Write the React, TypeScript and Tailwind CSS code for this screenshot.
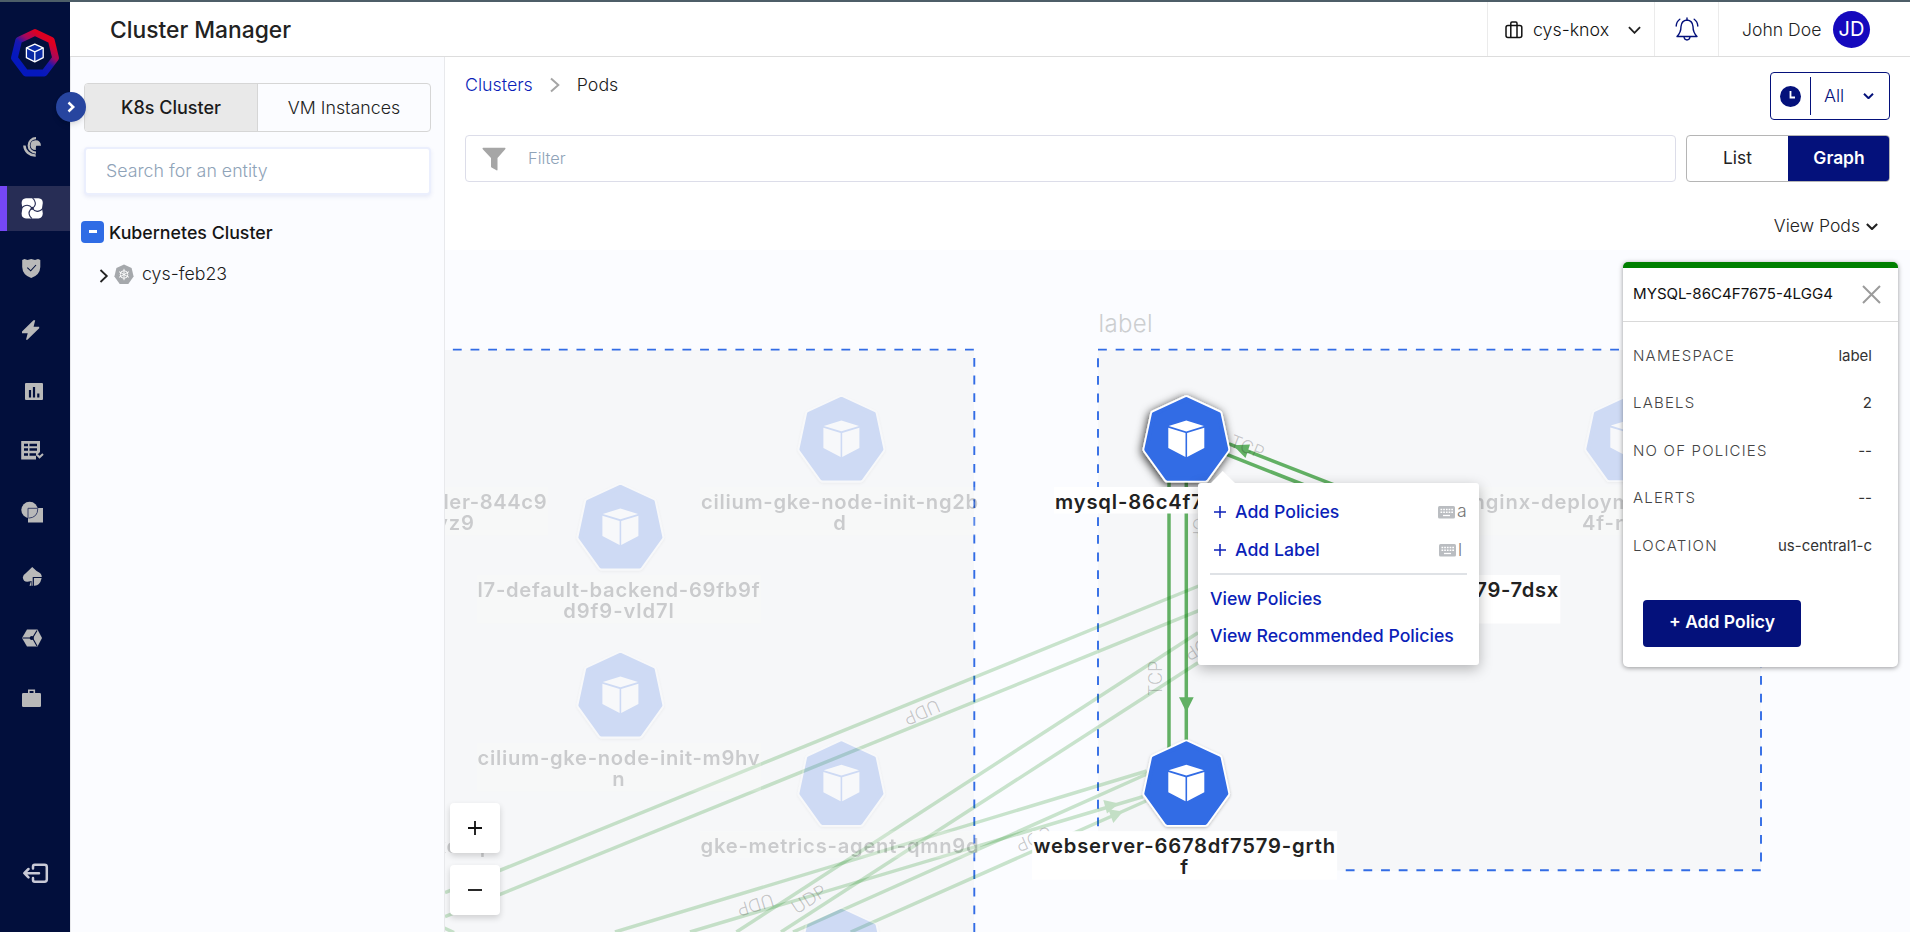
import React from "react";

const NAVY = "#04117b";

/* ---------- Sidebar ---------- */

function Logo() {
  return (
    <svg viewBox="0 0 56 56" className="h-14 w-14">
      <defs>
        <linearGradient id="ring" x1="0.3" y1="0.75" x2="0.78" y2="0.12">
          <stop offset="0" stopColor="#0518bd" />
          <stop offset="0.38" stopColor="#1a18b0" />
          <stop offset="0.62" stopColor="#a4085f" />
          <stop offset="0.95" stopColor="#de0020" />
        </linearGradient>
      </defs>
      <path
        d="M28 8.500 L44.300 16.300 L48.600 34 L37.300 49 H18.700 L7.400 34 L11.700 16.300 Z"
        fill="none"
        stroke="url(#ring)"
        strokeWidth="6.800"
        strokeLinejoin="round"
      />
      <g fill="#0a2aa5" stroke="#fff" strokeWidth="1.300" strokeLinejoin="round" transform="translate(0 1.300)">
        <path d="M27.800 18.800 L36.200 22.600 V32.400 L27.800 36.600 L19.400 32.400 V22.600 Z" />
        <path d="M19.400 22.600 L27.800 26.600 L36.200 22.600 M27.800 26.600 V36.600" fill="none" />
      </g>
    </svg>
  );
}

const navIcons: { id: string; active?: boolean; art: React.ReactNode }[] = [
  {
    id: "overview",
    art: (
      <g>
        <path d="M35.500 15.200 Q40.500 15 41 20.700 H36.300 Q35.800 21 35.800 25 Q30.500 25 30.500 20.200 Q30.500 15.400 35.500 15.200Z" />
        <g fill="none" stroke="#b9b9b9">
          <path d="M36 13.100 A7.300 7.300 0 0 0 36 27.700" strokeWidth="2.200" />
          <path d="M24.400 20.500 A10.800 10.500 0 0 0 35.700 30.500" strokeWidth="2.500" />
        </g>
      </g>
    ),
  },
  {
    id: "clusters",
    active: true,
    art: (
      <g>
        <path
          d="M26 12.200 H38.500 Q42.800 12.500 42.800 17 L42 22.300 L42.800 27.500 Q42.500 32 38.500 32.400 H26 Q21.600 32.200 21.600 27.500 L22.400 22.300 L21.600 17 Q21.800 12.500 26 12.200Z"
          fill="#fff"
        />
        <path
          d="M32.200 22.300 Q37 19.500 34.500 14.500 Q33.800 13 32.500 12.200 M32.200 22.300 Q35.500 27 40.300 24.500 Q42 23.700 42.800 22.300 M32.200 22.300 Q27.500 25.500 29.800 30 Q30.700 31.700 32 32.400 M32.200 22.300 Q29 17.800 24.200 20 Q22.500 20.800 21.600 22.300"
          fill="none"
          stroke="#272d55"
          strokeWidth="1.100"
        />
        <circle cx="32.200" cy="22.300" r="1.500" fill="#272d55" />
      </g>
    ),
  },
  {
    id: "policies",
    art: (
      <g>
        <path d="M22.200 13 L24.500 12 L27.500 13 L31.200 12 L35 13 L38 12 L40.300 13 V20 Q40 28 31.200 31 Q22.500 28 22.200 20Z" />
        <path d="M27.300 20.700 L30.700 23.800 L36 18" fill="none" stroke="#020f3c" strokeWidth="1.100" />
      </g>
    ),
  },
  {
    id: "actions",
    art: <path d="M33.500 12.200 H35.200 L33.600 18.800 H39.200 V20.200 L27.400 31.800 H26 L27.700 25.300 H22 V23.600Z" />,
  },
  {
    id: "reports",
    art: (
      <g>
        <rect x="25" y="14" width="18" height="17" rx="1" />
        <path d="M30 28.500 V21 M34 28.500 V18 M38.300 28.500 V24.500" stroke="#020f3c" strokeWidth="2.200" />
      </g>
    ),
  },
  {
    id: "inventory",
    art: (
      <g>
        <path d="M21.200 11 H40 V22 L36 26 V29.500 H21.200Z" />
        <path
          d="M24 15 H28 M29.500 15 H37 M24 19.500 H28 M29.500 19.500 H37 M24 24.500 H28 M29.500 24.500 H36"
          stroke="#020f3c"
          strokeWidth="2.400"
        />
        <path d="M37 24.800 L39.500 27.300 L43 24" fill="none" stroke="#b9b9b9" strokeWidth="2" />
      </g>
    ),
  },
  {
    id: "images",
    art: (
      <g>
        <circle cx="29.600" cy="19" r="8.300" />
        <rect x="28" y="17" width="15" height="14.500" />
        <path d="M28 27 V17.300 H37.800 Q38 26.500 28.500 27.200" fill="none" stroke="#3a426a" strokeWidth="1" />
      </g>
    ),
  },
  {
    id: "remediation",
    art: (
      <g>
        <path d="M32.200 15 Q36 19 40 21 Q42.500 23.500 41.500 26.500 Q40 33.500 34.500 33.800 H29.500 L31 29 Q23.500 31.500 22.800 25.500 Q23 22.500 26 21Z" />
        <path d="M33.300 34 V25.500 H42.500" fill="none" stroke="#020f3c" strokeWidth="1.200" />
        <path d="M31.600 29 V34" stroke="#020f3c" strokeWidth="0.600" />
      </g>
    ),
  },
  {
    id: "integrations",
    art: (
      <g>
        <path d="M27 16.500 H37.500 L42 25 L37.500 33.500 H27 L22 25Z" />
        <path d="M22.500 25 H31.500 M37 17.500 L32.500 25 L37 33" stroke="#020f3c" strokeWidth="1.100" fill="none" />
        <circle cx="31.800" cy="25" r="2.100" fill="#020f3c" />
      </g>
    ),
  },
  {
    id: "settings",
    art: (
      <g>
        <rect x="22" y="19" width="19" height="14" rx="1.300" />
        <path d="M28.800 19.500 V16.200 H34.300 V19.500" fill="none" stroke="#b9b9b9" strokeWidth="1.600" />
      </g>
    ),
  },
];

function Sidebar() {
  return (
    <aside className="relative flex w-[70px] shrink-0 flex-col bg-[#020f3c]">
      <div className="flex h-[123px] justify-center pt-[22px]">
        <Logo />
      </div>
      <nav className="flex flex-col gap-4">
        {navIcons.map((n) => (
          <div key={n.id} className={n.active ? "h-[45px] border-l-[7px] border-[#7647f7] bg-[#272d55]" : "h-[45px]"}>
            <svg viewBox="0 0 70 45" fill="#b9b9b9" className={n.active ? "-ml-[7px] h-[45px] w-[70px] max-w-none" : "h-[45px] w-[70px]"}>
              {n.art}
            </svg>
          </div>
        ))}
      </nav>
      <svg viewBox="0 0 70 30" className="mt-auto mb-[44px] h-[30px] w-[70px]" fill="none" stroke="#c9cad6" strokeWidth="2.500" strokeLinecap="round" strokeLinejoin="round">
        <path d="M33 10.500 V8.500 Q33 6.800 34.700 6.800 H44.500 Q46.800 6.800 46.800 9 V21.500 Q46.800 23.700 44.500 23.700 H34.700 Q33 23.700 33 22 V20" />
        <path d="M24.500 15.200 H39 M28.500 11 L24.300 15.200 L28.500 19.400" />
      </svg>
      <button className="absolute top-[90px] left-[56px] z-20 flex h-[30px] w-[30px] items-center justify-center rounded-full bg-[#27459f] shadow-md">
        <svg viewBox="0 0 10 12" className="h-3 w-2.5" fill="none" stroke="#fff" strokeWidth="2.500">
          <path d="M2.500 1.500 L7.200 6 L2.500 10.500" />
        </svg>
      </button>
    </aside>
  );
}

/* ---------- Small icons ---------- */

function Chevron({ className, width = 2 }: { className: string; width?: number }) {
  return (
    <svg viewBox="0 0 14 8" className={className} fill="none" stroke="currentColor" strokeWidth={width}>
      <path d="M1 1 L7 7 L13 1" />
    </svg>
  );
}

function SuitcaseIcon() {
  return (
    <svg viewBox="0 0 18 18" className="mt-px h-[18px] w-[18px]" fill="none" stroke="#111" strokeWidth="1.500">
      <rect x="1" y="4.500" width="15.800" height="12" rx="2" />
      <path d="M5.800 16.500 V2.200 Q5.800 1 7 1 H10.800 Q12 1 12 2.200 V16.500" />
    </svg>
  );
}

function BellIcon() {
  return (
    <svg viewBox="0 0 24 24" className="h-6 w-6" fill="none" stroke={NAVY} strokeWidth="1.400" strokeLinecap="round" strokeLinejoin="round">
      <path d="M12 1 V3 M12 3 Q6.500 3.500 6 9.500 Q6 15.500 2 19.500 H22 Q18 15.500 18 9.500 Q17.500 3.500 12 3Z" />
      <path d="M9 20 Q9.500 23 12 23 Q14.500 23 15 20 M4.800 2.200 Q1.500 4.500 1.200 9 M19.200 2.200 Q22.500 4.500 22.800 9" />
    </svg>
  );
}

function KeyboardIcon() {
  return (
    <svg viewBox="0 0 17 13" className="h-[13px] w-[17px]">
      <rect width="17" height="12.500" rx="1.500" fill="#babdc1" />
      <path d="M2.500 3.500 H15 M2.500 6.200 H15" stroke="#fff" strokeWidth="1.600" strokeDasharray="1.700 1" />
      <path d="M5 9.500 H12" stroke="#fff" strokeWidth="1.300" />
    </svg>
  );
}

/* ---------- Header ---------- */

function Header() {
  return (
    <header className="flex h-[55px] shrink-0 border-b border-[#dddddd] bg-white">
      <h1 className="flex flex-1 items-center pt-[2px] pl-[40px] text-[22.8px] font-medium text-[#222]">Cluster Manager</h1>
      <div className="flex w-[167px] items-center border-l border-[#ebebeb] pl-[17px]">
        <SuitcaseIcon />
        <span className="ml-[10px] w-[95px] pt-[2px] text-[17.8px] font-light text-[#111]">cys-knox</span>
        <Chevron className="mt-[2px] h-2 w-[13px] text-[#222]" />
      </div>
      <div className="flex w-[64px] items-center justify-center border-l border-[#ebebeb]">
        <BellIcon />
      </div>
      <div className="flex w-[192px] items-center border-l border-[#ebebeb] pl-[23px]">
        <span className="w-[91px] pt-[2px] text-[17.6px] font-light whitespace-nowrap text-[#222]">John Doe</span>
        <span className="flex h-[37px] w-[37px] items-center justify-center rounded-full bg-[#1509bd] text-[20px] text-white">JD</span>
      </div>
    </header>
  );
}

/* ---------- Entity panel ---------- */

function EntityPanel() {
  return (
    <section className="w-[375px] shrink-0 border-x border-[#e8e9ec] bg-[#fbfcff] pt-[26px]">
      <div className="ml-[13px] flex h-[49px] w-[347px] overflow-hidden rounded border border-[#d6d6d6] text-[18px]">
        <div className="flex w-[173px] items-center justify-center border-r border-[#d6d6d6] bg-[#e9e9e9] font-medium text-[#1b1b1b]">K8s Cluster</div>
        <div className="flex flex-1 items-center justify-center pt-px text-[17.8px] font-light text-[#222]">VM Instances</div>
      </div>
      <div className="mt-[15px] ml-[13px] flex h-[48px] w-[347px] items-center rounded border-2 border-[#ebeffd] bg-white pt-px pl-[20px] text-[17.8px] font-light text-[#8fa3b8] shadow-[0_2px_4px_rgba(60,80,180,0.10)]">
        Search for an entity
      </div>
      <div className="mt-[25px] ml-[10px] flex h-[23px] items-center">
        <span className="flex h-[22px] w-[23px] items-center justify-center rounded bg-[#2f6ce5]">
          <span className="h-[3px] w-2 bg-white" />
        </span>
        <span className="ml-[5px] pt-[3px] text-[17.8px] font-medium text-[#151515]">Kubernetes Cluster</span>
      </div>
      <div className="mt-[18px] ml-[28px] flex h-[27px] items-center">
        <svg viewBox="0 0 10 14" className="mt-[3px] h-[14px] w-[10px]" fill="none" stroke="#222" strokeWidth="1.800">
          <path d="M1.500 1 L7.800 7 L1.500 13" />
        </svg>
        <svg viewBox="0 0 20 21" className="ml-[5px] h-[21px] w-5">
          <path d="M10 .5 L17.600 4 L19.600 12.500 L14.300 20 H5.700 L.4 12.500 L2.400 4Z" fill="#a5a8ac" />
          <g fill="none" stroke="#fff" strokeWidth="0.900">
            <circle cx="10" cy="10.500" r="3.800" />
            <path d="M10 4.800 V16.200 M5 7.700 L15 13.300 M15 7.700 L5 13.300" />
          </g>
        </svg>
        <span className="ml-[8px] pb-px text-[17.8px] font-light text-[#1b1b1b]">cys-feb23</span>
      </div>
    </section>
  );
}

/* ---------- Toolbar ---------- */

function Toolbar() {
  return (
    <div className="h-[193px] shrink-0 pr-5 pl-5 text-[17.8px]">
      <div className="flex justify-between pt-[15px]">
        <div className="flex h-[26px] items-center font-light">
          <span className="text-[#0b1fb8]">Clusters</span>
          <svg viewBox="0 0 10 16" className="mr-[17px] ml-[17px] h-4 w-[10px]" fill="none" stroke="#a5a5a5" strokeWidth="2">
            <path d="M1 1.500 L8.300 8 L1 14.500" />
          </svg>
          <span className="text-[#1b1b1b]">Pods</span>
        </div>
        <div className="flex h-[48px] w-[120px] items-center rounded border border-[#04117b] text-[#04117b]">
          <svg viewBox="0 0 21 21" className="ml-[9px] h-[21px] w-[21px]">
            <circle cx="10.500" cy="10.500" r="10.500" fill={NAVY} />
            <path d="M10.500 5 V11.500 H15" fill="none" stroke="#fff" strokeWidth="1.800" />
          </svg>
          <span className="ml-[9px] h-[38px] border-l border-[#04117b]" />
          <span className="ml-[13px] w-[39px] font-light">All</span>
          <Chevron className="h-[6px] w-[11px]" width={2.6} />
        </div>
      </div>
      <div className="mt-[15px] flex gap-[10px]">
        <div className="flex h-[47px] flex-1 items-center rounded border border-[#dcdde9] bg-white">
          <svg viewBox="0 0 24 24" className="ml-4 h-6 w-6" fill="#a6a6a6">
            <path d="M1 .800 H23 Q24 1 23.200 2.200 L15.500 11 V23 Q15.300 23.800 14.500 23.300 L9.500 20.500 Q9 20.200 9 19.500 V11 L.8 2.200 Q0 1 1 .800Z" />
          </svg>
          <span className="ml-[22px] text-[16.4px] font-light text-[#8fa3b8]">Filter</span>
        </div>
        <div className="flex h-[47px] w-[204px] overflow-hidden rounded border border-[#b5b5b5]">
          <div className="flex w-[101px] items-center justify-center text-[17.4px] text-[#222]">List</div>
          <div className="-my-px -mr-px flex flex-1 items-center justify-center bg-[#04117b] text-[17.4px] font-semibold text-white">Graph</div>
        </div>
      </div>
      <div className="mt-[31px] flex items-center justify-end gap-[6px] pr-[12px] font-light text-[#222]">
        <span className="text-[17.6px]">View Pods</span>
        <Chevron className="mt-px h-[7px] w-[12px]" width={2.4} />
      </div>
    </div>
  );
}

/* ---------- Graph ---------- */

function Pod({ x, y, state = "dim" }: { x: number; y: number; state?: "dim" | "on" | "selected" }) {
  const shape = "M0 2 L32.400 17 L40 52.500 L19 81.700 H-19 L-40 52.500 L-32.400 17Z";
  return (
    <g transform={`translate(${x} ${y})`} opacity={state === "dim" ? 0.2 : 1}>
      <path
        d={shape}
        fill="#fff"
        stroke="#fff"
        strokeWidth="7.600"
        strokeLinejoin="round"
        filter={state === "selected" ? "url(#glow)" : "url(#soft)"}
      />
      <path d={shape} fill="#326ce5" stroke="#326ce5" strokeWidth="4" strokeLinejoin="round" />
      <g fill="#fff">
        <path d="M0 23.600 L17.600 29 L0 34.400 L-17.600 29Z" />
        <path d="M-18 30.800 L-.8 36 V60 L-18 51Z M18 30.800 L.8 36 V60 L18 51Z" />
      </g>
    </g>
  );
}

interface LabelProps {
  x: number;
  y: number;
  lines: string[];
  width: number;
  dim?: boolean;
  first?: number;
}

/* x is the label's centre and y its top edge; `first` fixes the width of line one. */
function PodLabel({ x, y, lines, width, dim = true, first }: LabelProps) {
  return (
    <g opacity={dim ? 0.2 : 1}>
      <rect x={x - width / 2} y={y} width={width} height={lines.length > 1 ? 48.5 : 26.5} fill={dim ? "#fcfff7" : "#fff"} />
      {lines.map((t, i) => (
        <text
          key={i}
          x={x}
          y={y + 21.8 + i * 20.7}
          textAnchor="middle"
          fontSize="20.200"
          fontWeight="600"
          letterSpacing="0.900"
          fill="#222"
          textLength={i === 0 ? first : undefined}
        >
          {t}
        </text>
      ))}
    </g>
  );
}

const dimEdges = [
  [445, 892.7, 1198.7, 586],
  [445, 916.7, 1198.7, 610.7],
  [736.4, 932, 1198, 632.7],
  [781, 932, 1198, 662.7],
  [615, 932, 1146.7, 771],
  [793, 932, 1147, 774],
  [690, 932, 1142.7, 796.7],
  [850.7, 932, 1146, 801],
  [440, 926, 454, 932.5],
];

const liveEdges = [
  [1169, 475, 1169, 748],
  [1186.3, 475, 1186.3, 742],
  [1229, 443.8, 1345, 489.2],
  [1226, 454.2, 1345, 501],
];

const protocolLabels: [string, number, number, number][] = [
  ["UDP", 922, 712.5, 156.5],
  ["UDP", 755.5, 905, 163],
  ["UDP", 809, 899, -33],
  ["TCP", 1155.7, 678.3, -90],
  ["TCP", 1247.3, 446.7, 22],
  ["TCP", 1199.8, 524, 90],
  ["UDP", 1202, 646, 147],
  ["UDP", 1034, 839, 156],
];

function Graph() {
  return (
    <svg viewBox="445 250 1465 682" className="block h-[682px] w-[1465px]">
      <defs>
        <filter id="glow" x="-30%" y="-30%" width="160%" height="160%">
          <feDropShadow dx="-1" dy="2" stdDeviation="5" floodColor="#000" floodOpacity="0.85" />
        </filter>
        <filter id="soft" x="-30%" y="-30%" width="160%" height="160%">
          <feDropShadow dx="0" dy="1" stdDeviation="1.500" floodColor="#000" floodOpacity="0.25" />
        </filter>
      </defs>

      <rect x="435" y="350" width="539" height="600" fill="#f6f7f9" />
      <rect x="1098" y="350" width="663" height="520.500" fill="#f6f7f9" />
      <g fill="none" stroke="#326ce5" strokeWidth="1.900" strokeDasharray="8.830 8.830">
        <path d="M435.200 349.600 H974.300 V940" />
        <path d="M1098 349.600 H1761" />
        <path d="M1098 358.300 V870" />
        <path d="M1098.500 870.300 H1761" />
        <path d="M1761 358.100 V870" />
      </g>
      <text x="1098.500" y="332" fontSize="24" fontWeight="300" fill="#ccced0" textLength="54">
        label
      </text>

      <g stroke="#008000" strokeWidth="3.500">
        <g strokeOpacity="0.2">
          {dimEdges.map(([a, b, c, d], i) => (
            <line key={i} x1={a} y1={b} x2={c} y2={d} />
          ))}
        </g>
        <g strokeOpacity="0.6">
          {liveEdges.map(([a, b, c, d], i) => (
            <line key={i} x1={a} y1={b} x2={c} y2={d} />
          ))}
        </g>
      </g>
      <g fill="#62b064">
        <path d="M1179 697.300 H1193.700 L1186.300 712Z" />
        <path d="M1233 445.300 L1250 444.500 L1245.500 458Z" />
      </g>
      <g fill="#c3dfc5">
        <path d="M1103.300 800 L1119 803.500 L1107 813.500Z" />
        <path d="M1108.300 809.300 L1123 811.500 L1113.300 822.900Z" />
      </g>
      <g fill="#222" fillOpacity="0.24" fontSize="18" fontWeight="300" textAnchor="middle">
        {protocolLabels.map(([t, x, y, r], i) => (
          <text key={i} transform={`translate(${x} ${y}) rotate(${r})`} y="6.500">
            {t}
          </text>
        ))}
      </g>

      <Pod x={841.4} y={396.9} />
      <Pod x={620.4} y={484.9} />
      <Pod x={620.4} y={652.9} />
      <Pod x={841.4} y={741.2} />
      <Pod x={841.4} y={908.9} />
      <Pod x={1628.3} y={396.6} />
      <Pod x={1186.3} y={397} state="selected" />
      <Pod x={1186.3} y={741.2} state="on" />

      <g opacity="0.2" fontSize="20.200" fontWeight="600" letterSpacing="0.900" fill="#222">
        <rect x="440" y="487" width="108" height="48.500" fill="#fcfff7" />
        <text x="443.500" y="508.800" textLength="104">
          ler-844c9
        </text>
        <text x="436" y="529.500">vz9</text>
        <text x="434.500" y="853.300">kc2q</text>
        <rect x="1470" y="487" width="314" height="48.500" fill="#fcfff7" />
        <text x="1472.500" y="508.800">nginx-deploym</text>
        <text x="1582" y="529.500">4f-rj</text>
      </g>
      <PodLabel x={840} y={487} lines={["cilium-gke-node-init-ng2b", "d"]} width={280} first={278} />
      <PodLabel x={619} y={575} lines={["l7-default-backend-69fb9f", "d9f9-vld7l"]} width={284} first={283} />
      <PodLabel x={619} y={743} lines={["cilium-gke-node-init-m9hv", "n"]} width={284} first={283} />
      <PodLabel x={840} y={831.2} lines={["gke-metrics-agent-qmn9d"]} width={280} first={279} />
      <PodLabel x={1184.7} y={831.2} lines={["webserver-6678df7579-grth", "f"]} width={305} dim={false} first={302.5} />
      <PodLabel x={1407.8} y={575} lines={["webserver-6678df7579-7dsx", "f"]} width={305} dim={false} first={302.5} />
      <PodLabel x={1185} y={487} lines={["mysql-86c4f7675-4lgg4"]} width={262} dim={false} first={260} />
    </svg>
  );
}

/* ---------- Overlays ---------- */

function ContextMenu() {
  return (
    <div className="absolute top-[233px] left-[753px] h-[182px] w-[281px] rounded-[3px] bg-white px-3 text-[17.7px] font-medium text-[#0b1fb8] shadow-[0_4px_14px_rgba(0,0,0,0.28)]">
      <svg viewBox="0 0 26 13" className="absolute -top-[12px] left-[12px] h-[13px] w-[26px]">
        <path d="M0 13 L12.700 0 L26 13Z" fill="#fff" />
      </svg>
      <div className="flex h-[38px] items-center pt-[20px]">
        <svg viewBox="0 0 12 12" className="mx-1 h-3 w-3" stroke="currentColor" strokeWidth="1.500">
          <path d="M6 0 V12 M0 6 H12" />
        </svg>
        <span className="ml-[5px] flex-1">Add Policies</span>
        <KeyboardIcon />
        <span className="ml-[2px] w-[10px] pb-[2px] font-light text-[#777]">a</span>
      </div>
      <div className="flex h-[38px] items-center pt-[20px]">
        <svg viewBox="0 0 12 12" className="mx-1 h-3 w-3" stroke="currentColor" strokeWidth="1.500">
          <path d="M6 0 V12 M0 6 H12" />
        </svg>
        <span className="ml-[5px] flex-1">Add Label</span>
        <KeyboardIcon />
        <span className="ml-[2px] w-[9px] font-light text-[#777]">l</span>
      </div>
      <div className="mt-[14px] h-[2px] bg-[#dfe2e6]" />
      <div className="mt-[10px] leading-[27px]">View Policies</div>
      <div className="mt-[10px] leading-[27px] whitespace-nowrap">View Recommended Policies</div>
    </div>
  );
}

const details: [string, string][] = [
  ["NAMESPACE", "label"],
  ["LABELS", "2"],
  ["NO OF POLICIES", "--"],
  ["ALERTS", "--"],
  ["LOCATION", "us-central1-c"],
];

function DetailsCard() {
  return (
    <div className="absolute top-[12px] left-[1178px] h-[405px] w-[275px] overflow-hidden rounded-[5px] border-t-[6px] border-[#008000] bg-white shadow-[0_1px_5px_rgba(0,0,0,0.4)]">
      <div className="flex h-[54px] items-center justify-between border-b border-[#d9d9d9] pr-[17px] pl-[10px]">
        <span className="text-[15.1px] text-[#111]">MYSQL-86C4F7675-4LGG4</span>
        <svg viewBox="0 0 19 19" className="h-[19px] w-[19px]" stroke="#9b9b9b" strokeWidth="2">
          <path d="M1 1 L18 18 M18 1 L1 18" />
        </svg>
      </div>
      <div className="flex flex-col pt-[10px] pr-[26px] pl-[10px]">
        {details.map(([k, v]) => (
          <div key={k} className="flex h-[47.5px] items-center justify-between">
            <span className="text-[15px] font-light tracking-[1.2px] text-[#444]">{k}</span>
            <span className="text-[15px] text-[#333]">{v}</span>
          </div>
        ))}
      </div>
      <button className="mt-[30px] ml-[20px] flex h-[47px] w-[158px] items-center justify-center rounded bg-[#04117b] pb-[2px] text-[17.5px] font-semibold text-white">
        + Add Policy
      </button>
    </div>
  );
}

function ZoomControls() {
  return (
    <div className="absolute top-[553px] left-[5px] flex flex-col gap-3">
      {["M0 7 H14 M7 0 V14", "M0 7 H14"].map((d) => (
        <button key={d} className="flex h-[50px] w-[50px] items-center justify-center rounded bg-white shadow-[0_3px_6px_rgba(0,0,0,0.16)]">
          <svg viewBox="0 0 14 14" className="h-3.5 w-3.5" stroke="#111" strokeWidth="1.800">
            <path d={d} />
          </svg>
        </button>
      ))}
    </div>
  );
}

export default function App() {
  return (
    <div className="flex h-[932px] w-[1910px] flex-col overflow-hidden border-t-2 border-[#4d5e68] bg-white font-['Inter',sans-serif]">
      <div className="flex min-h-0 flex-1">
        <Sidebar />
        <div className="flex min-w-0 flex-1 flex-col">
          <Header />
          <div className="flex min-h-0 flex-1">
            <EntityPanel />
            <main className="flex min-w-0 flex-1 flex-col">
              <Toolbar />
              <div className="relative flex-1 overflow-hidden bg-[#fbfcff]">
                <Graph />
                <ContextMenu />
                <DetailsCard />
                <ZoomControls />
              </div>
            </main>
          </div>
        </div>
      </div>
    </div>
  );
}
